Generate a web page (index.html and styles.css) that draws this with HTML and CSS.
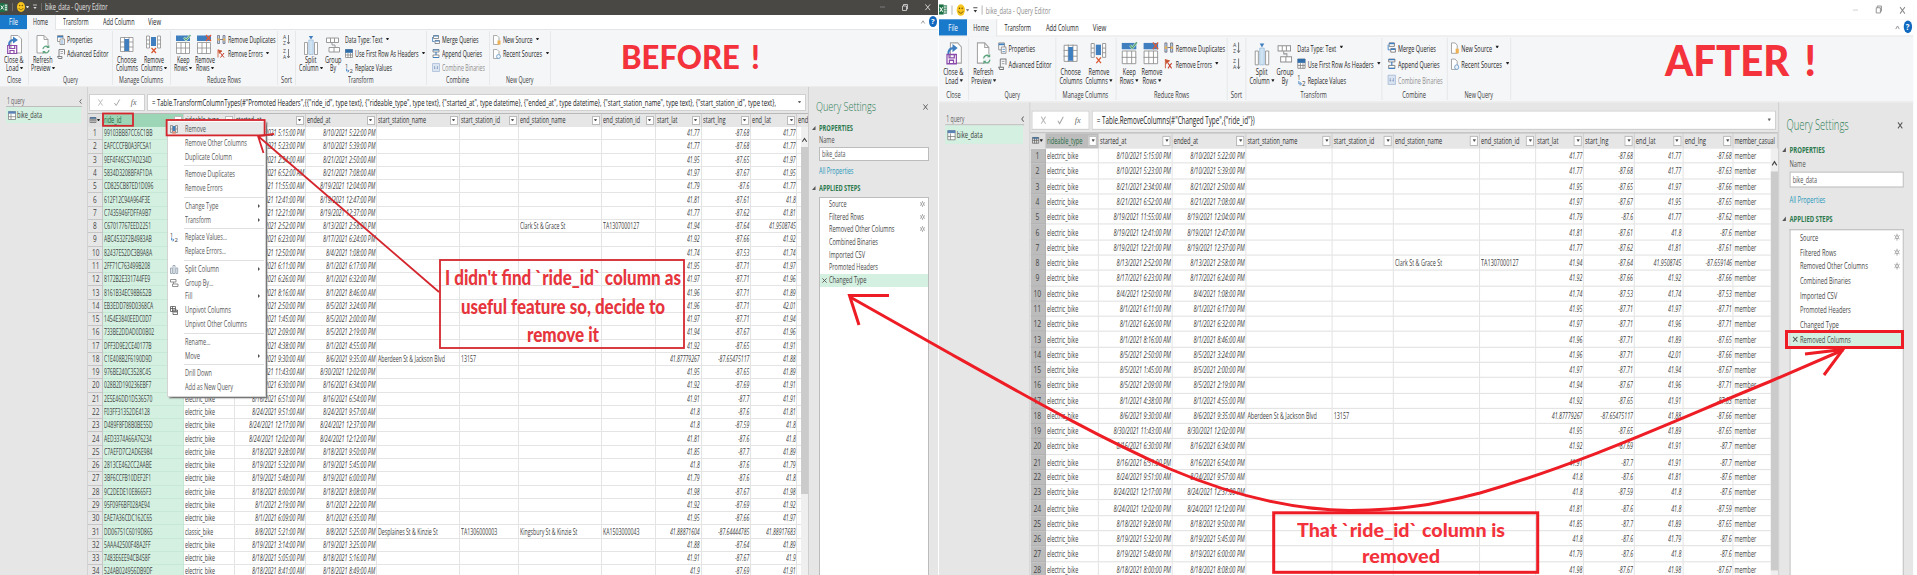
FILE: index.html
```html
<!DOCTYPE html>
<html lang="en">
<head>
<meta charset="utf-8">
<title>bike_data - Query Editor</title>
<link rel="stylesheet" href="styles.css">
</head>
<body>
<main class="board">
  <section class="pane before" id="before"></section>
  <div class="after-slot"><section class="pane after" id="after"></section></div>

  <svg class="marks" viewBox="0 0 1917 575" width="1917" height="575" fill="none">
    <g stroke="#d5262e" stroke-width="1.8">
      <rect x="103" y="113.5" width="30" height="12.3"/>
      <rect x="166.6" y="120" width="98" height="15.4"/>
      <path d="M439 292L258 136M274 134L258 136L263.500 153"/>
      <rect x="440" y="260" width="244" height="88"/>
    </g>
    <g stroke="#ee1c24" stroke-width="3">
      <path d="M889 295.500H849.500L859 325"/>
      <path d="M850 297L950 353.500C1040 404 1100 438 1170 469C1243 500 1300 510 1350 510.500C1410 510 1440 503 1480 493C1590 461 1680 418 1770 381.500L1843 350"/>
      <path d="M1805 354L1843 349.500L1824 375"/>
      <rect x="1273.700" y="512.800" width="264" height="59.500"/>
      <rect x="1786.500" y="331.500" width="116" height="16"/>
    </g>
  </svg>
  <h1 class="title title-before"><span class="fit" data-w="139">BEFORE !</span></h1>
  <h1 class="title title-after"><span class="fit" data-w="151">AFTER !</span></h1>
  <div class="note note-before">
    <p><span class="fit" data-w="236">I didn't find `ride_id` column as</span></p>
    <p><span class="fit" data-w="204">useful feature so, decide to</span></p>
    <p><span class="fit" data-w="72">remove it</span></p>
  </div>
  <div class="note note-after">
    <p><span class="fit" data-w="208">That `ride_id` column is</span></p>
    <p><span class="fit" data-w="78">removed</span></p>
  </div>
</main>
<script src="app.js"></script>
</body>
</html>
```

FILE: styles.css
```css
* { box-sizing: border-box; }
html, body { margin: 0; background: #fff; overflow: hidden; }
body { width: 1917px; height: 575px; font-family: "Open Sans", "Noto Sans", sans-serif; }
p, h1 { margin: 0; }
.board { position: relative; display: flex; width: 1917px; height: 575px; overflow: hidden; }

.fit { display: inline-flex; white-space: pre; flex: none; }
.fit > i { font-style: inherit; flex: none; transform-origin: 0 50%; }
svg { display: block; flex: none; overflow: visible; }

/* editor window */
.pane { width: 938px; height: 575px; flex: none; display: flex; flex-direction: column; overflow: hidden; background: #e6e6e6; font-size: 8.500px; line-height: 10px; color: #262626; }
.after-slot { width: 978px; height: 575px; padding-top: 2px; margin-left: 1px; overflow: hidden; flex: none; }
.after { height: 497px; transform: scale(1.0385, 1.153); transform-origin: 0 0; }

.titlebar { height: 14.500px; flex: none; background: #4a4845; color: #e4e4e4; display: flex; align-items: center; padding-right: 8px; }
.after .titlebar { background: #fff; color: #8d8d8d; padding-bottom: 1px; }
.xl { width: 7.500px; height: 9px; overflow: hidden; margin-right: 4px; }
.bar { width: 1px; height: 8px; background: #8a8a8a; opacity: .6; }
.smile { margin: 0 1px 0 4px; }
.titlebar .fit { margin-left: 3px; }
.winbtns { margin-left: auto; display: flex; align-items: center; gap: 17px; }

.tabs { height: 15.500px; flex: none; background: #fff; border-bottom: 1px solid #e4e5e6; display: flex; align-items: stretch; color: #262626; }
.tab { display: flex; align-items: center; justify-content: center; }
.tab.file { width: 27px; background: #1979ca; color: #fff; }
.tab.home { width: 28.500px; background: #f5f6f8; margin-bottom: -1px; border-right: 1px solid #e4e5e6; }
.help { margin-left: auto; display: flex; align-items: center; gap: 4px; padding-right: 1px; color: #fff; }
.help b { width: 8.400px; height: 11px; border-radius: 50%; background: #1068bf; font-size: 7.500px; line-height: 11px; text-align: center; }

.ribbon { height: 57px; flex: none; background: #f5f6f8; display: flex; border-bottom: 1px solid #ececed; }
.group { display: flex; flex-direction: column; border-right: 1px solid #e6e8ea; margin: 1px 0 1px; }
.tools { height: 45px; display: flex; }
.caption { display: flex; justify-content: center; align-items: center; height: 11px; color: #3c3c3c; }
.big { display: flex; flex-direction: column; align-items: center; padding-top: 3px; flex: none; }
.big .pic { height: 21.500px; display: flex; align-items: center; margin-bottom: 1px; }
.big span.ln { line-height: 8.400px; height: 8.400px; display: flex; align-items: center; margin-top: -.4px; }
.small { display: flex; flex-direction: column; padding-top: 1.500px; flex: none; }
.small > div { height: 14px; display: flex; align-items: center; gap: 2px; }
.small .off { color: #8f8f8f; }
.dd { border: 1.500px solid transparent; border-top: 2.200px solid #222; border-bottom: 0; margin-left: 1.500px; flex: none; width: 3px; height: 2.200px; }

.work { flex: 1; min-height: 0; display: flex; }
.queries { width: 88px; flex: none; border-right: 1px solid #d2d2d2; padding: 9px 6px 0; }
.qhead { display: flex; align-items: center; justify-content: space-between; height: 11px; border-bottom: 1px solid #bdbdbd; color: #5c5c5c; margin-right: -.5px; padding-left: .5px; }
.qitem { height: 16px; background: #d3f0e0; display: flex; align-items: center; padding-left: 2px; gap: 1px; color: #3c3c3c; }

.center { width: 720.500px; flex: none; display: flex; flex-direction: column; min-height: 0; border-right: 1px solid #cfcfcf; overflow: hidden; }
.formula { height: 17px; margin: 7px 2px 2px 1px; display: flex; gap: 1.500px; flex: none; }
.fbtns { width: 56px; border: 1px solid #d0d0d0; background: #fff; display: flex; align-items: center; justify-content: space-around; padding: 0 2px; }
.fbox { flex: 1; border: 1px solid #d0d0d0; background: #fff; display: flex; align-items: center; padding: 0 4px; font-size: 8.800px; color: #161616; }
.fbox .dd { margin-left: auto; border-top-color: #666; }
.fx { font: italic 8px "Liberation Serif", serif; color: #666; }

.hrow { height: 14px; flex: none; display: flex; border-top: 1px solid #b8b8b8; color: #303030; }
.h { flex: none; height: 13px; display: flex; align-items: center; justify-content: space-between; border-right: 1px solid #cfcfcf; padding: 0 1px 1.500px; overflow: hidden; font-size: 8.400px; }
.h.sel { background: #9dd6b6; color: #1f6a41; }
.after .h.sel { background: #bcbcbc; }
.h.corner { justify-content: center; gap: 0; background: #e0e0e0; }
.flt { width: 8px; height: 9.500px; border: 1px solid #bbb; background: #fff; display: flex; align-items: center; justify-content: center; flex: none; margin-top: 1px; }
.flt .dd { margin: 0; border-top-color: #555; }

.body { flex: 1; min-height: 0; display: flex; overflow: hidden; }
.rows { width: 713px; flex: none; background: #fff; overflow: hidden; }
.r { display: flex; height: 13.290px; }
.c { flex: none; height: 100%; display: flex; align-items: center; border-right: 1px solid #e4e4e4; border-bottom: 1px solid #e4e4e4; padding: 0 .5px 0 1px; font-size: 8.100px; color: #424242; overflow: hidden; }
.c.num { justify-content: flex-end; font-style: italic; }
.c.idx { background: #e6e6e6; justify-content: center; border-color: #c6c6c6; font-size: 8.500px; color: #444; }
.after .c.idx { background: #bcbcbc; border-color: #b2b2b2; }
.c.sel { background: #d3f0e0; border-color: #c8e8d6; }
.scroll { flex: 1; background: #efefef; display: flex; flex-direction: column; align-items: center; padding-top: 11px; }
.thumb { width: 100%; background: #cbcbcb; height: 347px; margin-top: 5px; flex: none; }
.after .thumb { height: 346px; }

.settings { flex: 1; padding: 11.500px 9px 0 7.500px; display: flex; flex-direction: column; }
.stitle { display: flex; align-items: center; justify-content: space-between; height: 16px; font-size: 12.500px; font-weight: 300; color: #2f8056; padding-right: 1px; }
.sect { display: flex; align-items: center; font-weight: 700; color: #2c7a4e; height: 10px; margin-left: -4px; font-size: 8.200px; }
.sect svg { margin-right: 3px; }
.sub { padding-left: 2.500px; display: flex; align-items: center; height: 14px; color: #555; }
.inp { margin-left: 2.500px; margin-top: 0; height: 14px; border: 1px solid #bcbcbc; background: #fff; display: flex; align-items: center; padding-left: 2.500px; color: #555; }
.link { color: #2496ba; padding-left: 2.500px; height: 20px; display: flex; align-items: center; }
.steps { flex: 1; margin: 4px 0 0 2.500px; border: 1px solid #bcbcbc; border-bottom: 0; background: #fff; padding-top: .2px; }
.step { height: 12.680px; display: flex; align-items: center; color: #484848; padding: 0 0 .8px 2px; }
.step .x { width: 7.500px; }
.step .gear { margin-left: auto; margin-right: 3.500px; }
.step.on { background: #d3f0e0; }

/* context menu */
.menu { position: absolute; left: 166.500px; top: 120px; width: 99px; height: 277px; padding-top: 1.200px; background: #fff; border: 1px solid #d4d4d4; box-shadow: 1.500px 1.500px 1.500px #777; color: #585858; font-size: 8.500px; line-height: 10px; }
.mi { height: 13.900px; display: flex; align-items: center; padding-right: 5px; }
.mi .ic { width: 17px; padding-left: 2px; flex: none; }
.mi .arrow { margin-left: auto; border: 2px solid transparent; border-left: 2.500px solid #555; border-right: 0; }
.mi.hot { background: #e9e9e9; }
.sep { height: 1px; background: #e0e0e0; margin: 1.400px 1px 1.250px 16px; }

/* annotations */
.marks { position: absolute; left: 0; top: 0; }
.title, .note { position: absolute; font-family: Lato, sans-serif; color: #f3323b; }
.title { font-weight: 900; }
.title-before { left: 621px; top: 37px; font-size: 32px; line-height: 40px; word-spacing: 4px; }
.title-after { left: 1665px; top: 35px; font-size: 42px; line-height: 50px; word-spacing: 6px; }
.note { text-align: center; font-weight: 900; }
.note p { display: flex; justify-content: center; }
.note-before { left: 440px; top: 263px; width: 246px; font-size: 20.500px; line-height: 28.500px; color: #e6353d; }
.note-after { left: 1272px; top: 517px; width: 257px; font-size: 18px; line-height: 26px; }
```

FILE: app.js
```js
const T = (s, w, cls = '') => `<span class="fit ${cls}" data-w="${w}">${s}</span>`;
const K = (s, k) => `<span class="fit" data-k="${k}">${s}</span>`;
const DD = '<span class="dd"></span>';
const svg = (w, h, body, vb) => `<svg width="${w}" height="${h}" viewBox="${vb || `0 0 ${w} ${h}`}" fill="none" preserveAspectRatio="none">${body}</svg>`;

const doc = (x = 0) => `<path d="M${1 + x} .5h7l4 4V18h-11z" fill="#fff" stroke="#a3a3a3"/><path d="M${8 + x} .5v4h4" stroke="#a3a3a3"/>`;
const grid = (hl) => `<path d="M.5 1.500h12.500v14H.5z" fill="#fff" stroke="#8e8e8e" stroke-width=".8"/><path d="M4.500 1v15M9 1v15M0 6h13M0 11h13" stroke="#8e8e8e" stroke-width=".8"/>${hl}`;
const I = {
  load: svg(15, 19, `<path d="M4 .5h7l3.500 3.500v14H4z" fill="#fff" stroke="#a3a3a3"/><path d="M2 10C2 6 4 5 7 5" stroke="#3f7fc0" stroke-width="1.900"/><path d="M6 1.500L11 5L6 8.500z" fill="#3f7fc0"/><path d="M.7 10.500h9v8h-9zM2.700 10.500v3h5v-3M3 18.500v-3h4v3" fill="#fff" stroke="#8a4bab" stroke-width="1.200"/>`),
  refresh: svg(14, 19, doc() + `<circle cx="10" cy="14.500" r="4.300" fill="#f5f6f8"/><path d="M7 14a3 3 0 0 1 5-2M13 15a3 3 0 0 1-5 2" stroke="#5aa37c" stroke-width="1.200"/><path d="M13.300 10v3h-3zM6.700 19v-3h3z" fill="#5aa37c"/>`),
  choose: svg(14, 17, grid('<path d="M4.500 3h4.500v12H4.500z" fill="#3f7fc0"/>')),
  remcol: svg(15, 19, `<path d="M.5 1h3v12h-3zM11.500 1h3v12h-3zM.5 5h3M.5 9h3M11.500 5h3M11.500 9h3" fill="#fff" stroke="#8e8e8e" stroke-width=".8"/><path d="M5 2h5v9H5z" fill="#3f7fc0"/><path d="M5.500 13l4.500 5M10 13l-4.500 5" stroke="#d9532c" stroke-width="1.200"/>`),
  keep: svg(15, 19, `<path d="M.5 7.500h13v11H.5zM5 7.500v11M9.500 7.500v11M0 13h14" fill="#fff" stroke="#8e8e8e" stroke-width=".8"/><path d="M0 .5h14v5.500H0z" fill="#3f7fc0"/><path d="M8 2.500l2 2.500L14.500 0" stroke="#bfe0cc" stroke-width="2.200"/><path d="M8 2.500l2 2.500L14.500 0" stroke="#4a9a6c"/>`),
  remrow: svg(15, 19, `<path d="M.5 7.500h13v11H.5zM5 7.500v11M9.500 7.500v11M0 13h14" fill="#fff" stroke="#8e8e8e" stroke-width=".8"/><path d="M0 .5h14v5.500H0z" fill="#3f7fc0"/><path d="M9 0l5 6M14 0L9 6" stroke="#e25a33" stroke-width="1.200"/>`),
  split: svg(14, 20, `<path d="M.5 7.500h3v12h-3zM10.500 7.500h3v12h-3z" fill="#fff" stroke="#8e8e8e" stroke-width=".8"/><path d="M4.800 5h4.400v14.500H4.800z" fill="#cfe3f3" stroke="#8fb6d8" stroke-width=".6"/><path d="M4.800 1h4.400L7 4.500z" fill="#3f7fc0"/>`),
  group: svg(14, 16, `<path d="M.5 1h12v4.500H.5zM4.500 1v4.500M8.500 1v4.500M3 10.500h10.500V15H3zM8 10.500V15M6 5.500v2.500h3v2.500" fill="#fff" stroke="#8e8e8e" stroke-width=".9"/>`),
  props: svg(8, 10, `<path d="M.5.500h5.500v6H.500z" fill="#fff" stroke="#888" stroke-width=".8"/><path d="M.500 1h5.500v1.500H.500z" fill="#3f7fc0"/><path d="M3 4h4.500v5.500H3z" fill="#fff" stroke="#888" stroke-width=".8"/><path d="M4 6h2.500M4 8h2.500" stroke="#3f7fc0" stroke-width=".7"/>`),
  adv: svg(8, 10, `<path d="M2 .5h5.500v5M2 .5v7M.5 7.500h4.500v2H1.500z" stroke="#777" stroke-width=".9"/><path d="M3.500 2.500h2.500M3.500 4.500h2.500" stroke="#888" stroke-width=".7"/>`),
  dup: svg(8.5, 9, `<path d="M.5.500h2v8h-2zM6 .5h2v8H6z" fill="#bcd3e8" stroke="#667" stroke-width=".7"/><path d="M.5 3.500h2v2h-2zM6 3.500h2v2H6z" fill="#f0b34c"/><path d="M3 4.500h3" stroke="#667" stroke-width=".8"/>`),
  err: svg(8.5, 9, `<path d="M1 .5v8M1 1l4 1-3 2.500" stroke="#c8502e" fill="#c8502e" stroke-width=".8"/><path d="M3.500 4l3.500 4.500M7 4L3.500 8.500" stroke="#c8402e" stroke-width="1"/>`),
  az: (a, b) => svg(7, 11, `<text x="0" y="5" font-size="5" fill="#444" font-family="Open Sans">${a}</text><text x="0" y="10.500" font-size="5" fill="#444" font-family="Open Sans">${b}</text><path d="M5.500 1v8.500M4.200 8l1.300 2 1.300-2" stroke="#555" stroke-width=".7"/>`),
  first: svg(8, 9, `<path d="M.5.500h7v8h-7zM3 4v4.500M5.500 4v4.500M.5 6h7" fill="#fff" stroke="#777" stroke-width=".7"/><path d="M.3.300h7.400v3.500H.3z" fill="#2f6dab"/>`),
  repl: svg(8, 10, `<text x="0" y="5" font-size="5.500" fill="#444" font-family="Open Sans">1</text><text x="4.500" y="9.500" font-size="6" fill="#444" font-family="Open Sans">2</text><path d="M1.500 5.500v2.500h2M2.700 6.600l1.400 1.400-1.400 1.400" stroke="#3f7fc0" stroke-width=".8"/>`),
  merge: svg(8, 9, `<path d="M1.500.500h5v3h-5zM3 5.500h4.500v3H3z" fill="#fff" stroke="#777" stroke-width=".8"/><path d="M1.500 1h5M3 6h4.500" stroke="#3f7fc0" stroke-width="1.200"/><path d="M.5 2v4.500h2" stroke="#3f7fc0" stroke-width=".8"/>`),
  append: svg(8, 9, `<path d="M1 .5h6v2.500H1zM1 6h6v2.500H1z" fill="#fff" stroke="#777" stroke-width=".8"/><path d="M1 1h6M1 8.500h6M4 3v3" stroke="#3f7fc0" stroke-width="1.100"/>`),
  comb: svg(8, 9, `<path d="M.5.500h7v8h-7z" fill="#dbe4f1" stroke="#a9bcd8" stroke-width=".8"/><path d="M2.500 3v3M5.500 3v3M2 5.200h1.500M4.500 5.200H6" stroke="#8fa3c4" stroke-width=".8"/>`),
  newsrc: svg(8, 10, `<path d="M.5.500h3.500l2 2v7H.500z" fill="#fff" stroke="#999" stroke-width=".8"/><path d="M4.500 5.500h3v4h-3z" fill="#efb052"/>`),
  recent: svg(8, 10, `<path d="M.5.500h3.500l2 2v7H.500z" fill="#fff" stroke="#999" stroke-width=".8"/><circle cx="5.500" cy="7.500" r="2" fill="#eaf2fa" stroke="#6d9dcb" stroke-width=".8"/>`),
  table: svg(8, 9, `<path d="M.5.500h7v8h-7zM3 3v5.500M.5 5.700h7" fill="#fff" stroke="#777" stroke-width=".7"/><path d="M.3.300h7.400v2.400H.3z" fill="#5b83b5"/>`),
  x: (c = '#777', w = 5, h = 6) => svg(w, h, `<path d="M.4.400L${w - .4} ${h - .4}M${w - .4} .4L.4 ${h - .4}" stroke="${c}" stroke-width=".9"/>`),
  gear: `<svg class="gear" width="5" height="6" viewBox="0 0 6 7" fill="none" preserveAspectRatio="none"><circle cx="3" cy="3.500" r="1.600" stroke="#999"/><path d="M3 0v1.500M3 5.500V7M0 1.700l1.500.800M4.500 4.500l1.500.800M0 5.300l1.500-.8M4.500 2.500L6 1.700" stroke="#999" stroke-width=".9"/></svg>`,
  smile: '<svg class="smile" width="8" height="10" viewBox="0 0 8 10"><ellipse cx="4" cy="5" rx="4" ry="5" fill="#f7c51e"/><path d="M1.800 6c1 2.300 3.400 2.300 4.400 0" stroke="#6b4a00" stroke-width=".8" fill="none"/><circle cx="2.700" cy="3.500" r=".7" fill="#6b4a00"/><circle cx="5.300" cy="3.500" r=".7" fill="#6b4a00"/></svg>',
  xl: '<svg class="xl" width="7.500" height="9" viewBox="0 0 7.500 9"><path d="M0 0h4.500v9H0z" fill="#1e7145"/><path d="M4.500 1.200h3v6.600h-3z" fill="#fff" stroke="#1e7145" stroke-width=".7"/><path d="M6 1.500v6M4.500 3.500h3M4.500 5.500h3" stroke="#1e7145" stroke-width=".5"/><path d="M.8 2.500l2.800 4M3.600 2.500L.8 6.500" stroke="#fff" stroke-width=".9"/></svg>',
};

const big = (icon, w, ml, lines) => `<div class="big" style="width:${w}px;margin-left:${ml}px"><div class="pic">${icon}</div>${lines.map(l => `<span class="ln">${T(l[0], l[1])}${l[2] ? DD : ''}</span>`).join('')}</div>`;
const small = (ml, rows) => `<div class="small" style="margin-left:${ml}px">${rows.map(r => `<div class="${r[4] || ''}">${r[0]}${r[1] ? T(r[1], r[2]) : ''}${r[3] ? DD : ''}</div>`).join('')}</div>`;
const group = (w, cap, cw, tools) => `<div class="group" style="width:${w}px"><div class="tools">${tools}</div><div class="caption">${T(cap, cw)}</div></div>`;

const ribbon = () => `<div class="ribbon">` +
  group(28.5, 'Close', 14, big(I.load, 26, 1, [['Close &amp;', 19.5], ['Load', 12.5, 1]])) +
  group(84, 'Query', 15, big(I.refresh, 26, 1, [['Refresh', 19.5], ['Preview', 19.5, 1]]) + small(1.5, [[I.props, 'Properties', 25.5], [I.adv, 'Advanced Editor', 41.5]])) +
  group(58, 'Manage Columns', 44, big(I.choose, 26, 1.5, [['Choose', 19.5], ['Columns', 22]]) + big(I.remcol, 27, 0, [['Remove', 20], ['Columns', 21.5, 1]])) +
  group(107.5, 'Reduce Rows', 34, big(I.keep, 22, 1.5, [['Keep', 12.5], ['Rows', 13.5, 1]]) + big(I.remrow, 21, 0, [['Remove', 20], ['Rows', 13.5, 1]]) + small(2, [[I.dup, 'Remove Duplicates', 47.5], [I.err, 'Remove Errors', 35, 1]])) +
  group(18, 'Sort', 11, small(5, [[I.az('A', 'Z')], [I.az('Z', 'A')]])) +
  group(131, 'Transform', 25.5, big(I.split, 25, 2, [['Split', 11.5], ['Column', 19.5, 1]]) + big(I.group, 22, -1, [['Group', 16.5], ['By', 6]]) + small(1, [['', 'Data Type: Text', 37.5, 1], [I.first, 'Use First Row As Headers', 63.5, 1], [I.repl, 'Replace Values', 37]])) +
  group(62.5, 'Combine', 23, small(4.5, [[I.merge, 'Merge Queries', 36.5], [I.append, 'Append Queries', 40], [I.comb, 'Combine Binaries', 43, 0, 'off']])) +
  group(61, 'New Query', 27.5, small(3.5, [[I.newsrc, 'New Source', 29.5, 1], [I.recent, 'Recent Sources', 39, 1]])) + `</div>`;

const D = `99103BB87CC6C1BB|10|5:15:00 PM|5:22:00 PM|41.77|-87.68|41.77|-87.68
EAFCCCFB0A3FC5A1|10|5:23:00 PM|5:39:00 PM|41.77|-87.68|41.77|-87.63
9EF4F46C57AD234D|21|2:34:00 AM|2:50:00 AM|41.95|-87.65|41.97|-87.66
5834D3208BFAF1DA|21|6:52:00 AM|7:08:00 AM|41.97|-87.67|41.95|-87.65
CD825CB87ED1D096|19|11:55:00 AM|12:04:00 PM|41.79|-87.6|41.77|-87.62
612F12C94A964F3E|19|12:41:00 PM|12:47:00 PM|41.81|-87.61|41.8|-87.6
C7435946FDFFA9B7|19|12:21:00 PM|12:37:00 PM|41.77|-87.62|41.81|-87.61
C67017767EED2251|13|2:52:00 PM|2:58:00 PM|41.94|-87.64|41.9508745|-87.659146
ABC4532F2B4983AB|17|6:23:00 PM|6:24:00 PM|41.92|-87.66|41.92|-87.66
82437E52DC3B9A8A|4|12:50:00 PM|1:08:00 PM|41.74|-87.53|41.74|-87.53
2FF71C763499B208|1|6:11:00 PM|6:17:00 PM|41.95|-87.71|41.97|-87.71
8172B2E331744FE9|1|6:26:00 PM|6:32:00 PM|41.97|-87.71|41.96|-87.71
8161B34EC98B652B|1|8:16:00 AM|8:46:00 AM|41.96|-87.71|41.89|-87.65
EB3EDD789D0368CA|5|2:50:00 PM|3:24:00 PM|41.96|-87.71|42.01|-87.66
1454E3840EEDC0D7|5|1:45:00 PM|2:00:00 PM|41.97|-87.71|41.94|-87.67
733BE2DDAD0D0B02|5|2:09:00 PM|2:19:00 PM|41.94|-87.67|41.96|-87.71
DFF3D9E2CE40177B|1|4:38:00 PM|4:55:00 PM|41.92|-87.65|41.91|-87.63
C1E408B2F6190D9D|6|9:30:00 AM|9:35:00 AM|41.87779267|-87.65475117|41.88|-87.66
976BE240C3528C45|30|11:43:00 AM|12:02:00 PM|41.95|-87.65|41.89|-87.65
028B2D190236EBF7|16|6:30:00 PM|6:34:00 PM|41.92|-87.69|41.91|-87.7
2E5E46DD1D536570|16|6:51:00 PM|6:54:00 PM|41.91|-87.7|41.91|-87.7
F03FF31352DE4128|24|9:51:00 AM|9:57:00 AM|41.8|-87.6|41.81|-87.6
D489F8FD8B0BE55D|24|12:17:00 PM|12:37:00 PM|41.8|-87.59|41.8|-87.6
AED3374A66A76234|24|12:02:00 PM|12:12:00 PM|41.81|-87.6|41.8|-87.59
C7AEFD7C2AD6E984|18|9:28:00 PM|9:50:00 PM|41.85|-87.7|41.89|-87.65
2813CE462CC2AABE|19|5:32:00 PM|5:45:00 PM|41.8|-87.6|41.79|-87.6
3BF6CCFB10DEF2F1|19|5:48:00 PM|6:00:00 PM|41.79|-87.6|41.8|-87.6
9C2DEDE10E8665F3|18|8:00:00 PM|8:08:00 PM|41.98|-87.67|41.98|-87.67
95F09F6BF028AE94|1|2:19:00 PM|2:22:00 PM|41.92|-87.69|41.92|
EAE7A36CDC162C65|1|6:09:00 PM|6:35:00 PM|41.95|-87.66|41.97|
DD06751C6019D865|8|5:21:00 PM|5:25:00 PM|41.88871604|-87.64444785|41.88917683|
5AAA42500F48A2FF|19|3:14:00 PM|3:25:00 PM|41.88|-87.64|41.89|
7483E6EE94CB458F|18|5:05:00 PM|5:16:00 PM|41.91|-87.67|41.9|
524AB024956DB9DF|18|8:41:00 AM|8:49:00 AM|41.9|-87.69|41.91|`.split('\n').map((l, i) => {
  const [id, d, s, e, la, ln, ea, en] = l.split('|');
  const n = i + 1;
  return {
    ride_id: id, rideable_type: n === 31 ? 'classic_bike' : 'electric_bike',
    started_at: `8/${d}/2021 ${s}`, ended_at: `8/${d}/2021 ${e}`,
    start_station_name: { 18: 'Aberdeen St &amp; Jackson Blvd', 31: 'Desplaines St &amp; Kinzie St' }[n] || '',
    start_station_id: { 18: '13157', 31: 'TA1306000003' }[n] || '',
    end_station_name: { 8: 'Clark St &amp; Grace St', 31: 'Kingsbury St &amp; Kinzie St' }[n] || '',
    end_station_id: { 8: 'TA1307000127', 31: 'KA1503000043' }[n] || '',
    start_lat: la, start_lng: ln, end_lat: ea, end_lng: en, member_casual: 'member',
  };
});

/* column: name, width, header text width */
const mid = [['started_at', 71, 25.5], ['ended_at', 71, 23.5], ['start_station_name', 83, 48], ['start_station_id', 59, 39], ['end_station_name', 83, 45.5], ['end_station_id', 54, 37], ['start_lat', 46, 20.5], ['start_lng', 49, 22.5], ['end_lat', 46.5, 19]];
const colsL = [['ride_id', 80.5, 17.5], ['rideable_type', 51, 34], ...mid, ['end_lng', 12, 21]];
const colsR = [['rideable_type', 51.5, 34], ...mid, ['end_lng', 48.5, 20.5], ['member_casual', 43, 39]];
const numeric = /_at$|_lat$|_lng$/;

function gridView(cols, count, left) {
  const head = `<div class="hrow"><div class="h corner" style="width:${left ? 15 : 14.5}px">${svg(6, 6, '<path d="M0 .5h6v5H0zM2 .5v5M4 .5v5M0 3h6" stroke="#555" stroke-width=".6"/><path d="M0 .3h6v1.400H0z" fill="#456f9c"/>')}${DD}</div>` +
    cols.map((c, i) => `<div class="h ${i ? '' : 'sel'}" style="width:${c[1]}px">${T(c[0], c[2])}${c[1] > 44 ? `<span class="flt">${DD}</span>` : ''}</div>`).join('') + '</div>';
  const rows = D.slice(0, count).map((r, n) => `<div class="r"><div class="c idx" style="width:${left ? 15 : 14.5}px">${K(n + 1, .76)}</div>` +
    cols.map((c, i) => {
      let v = r[c[0]];
      /* the open menu lies over the type column of the first rows */
      if (left && (c[0] === 'end_lng' || (c[0] === 'rideable_type' && n < 20))) v = '';
      const k = c[0] === 'ride_id' ? .623 : numeric.test(c[0]) ? (/_at/.test(c[0]) ? .665 : .637) : .647;
      return `<div class="c ${numeric.test(c[0]) ? 'num' : ''} ${left && !i ? 'sel' : ''}" style="width:${c[1]}px">${v ? K(v, k) : ''}</div>`;
    }).join('') + '</div>').join('');
  return head + `<div class="body"><div class="rows">${rows}</div><div class="scroll">${svg(5, 4, '<path d="M.3 3.700L2.500.500l2.200 3.200" stroke="#444" stroke-width="1.100"/>')}<div class="thumb"></div></div></div>`;
}

const steps = (list) => list.map((s, i) => `<div class="step ${i === list.length - 1 ? 'on' : ''}"><span class="x">${i === list.length - 1 ? I.x('#555', 5, 5) : ''}</span>${T(s[0], s[1])}${i < 3 ? I.gear : ''}</div>`).join('');
const tri = svg(3.5, 4, '<path d="M3.500 0v4H0z" fill="#555"/>');

function pane(left) {
  const wc = left ? '#ddd' : '#888';
  const list = [['Source', 17.5], ['Filtered Rows', 35], ['Removed Other Columns', 65.5], ['Combined Binaries', 49], ['Imported CSV', 36], ['Promoted Headers', 49], ['Changed Type', 37.5]];
  if (!left) list.push(['Removed Columns', 49]);
  return `<div class="titlebar">${I.xl}<span class="bar"></span>${I.smile}<span class="dd" style="border-top-color:${wc};margin:0 4px 0 0"></span>${svg(4, 6, `<path d="M0 1h4" stroke="${left ? wc : '#333'}" stroke-width=".8"/><path d="M.3 3h3.400L2 5z" fill="${left ? wc : '#333'}"/>`)}<span class="bar" style="margin-left:4px"></span>${T('bike_data - Query Editor', 62.5)}
    <div class="winbtns">${svg(5, 6, `<path d="M0 3h5" stroke="${wc}" stroke-width=".7" opacity=".5"/>`)}${svg(6, 7, `<path d="M.5 2h4v4.500h-4zM1.500 2V.5h4v4.500h-1" stroke="${wc}" stroke-width=".8"/>`)}${I.x(wc, 5.5, 6.5)}</div></div>
  <div class="tabs"><div class="tab file">${T('File', 9)}</div><div class="tab home">${T('Home', 15)}</div><div class="tab" style="margin-left:7px">${T('Transform', 25.5)}</div><div class="tab" style="margin-left:14.500px">${T('Add Column', 31.5)}</div><div class="tab" style="margin-left:13.500px">${T('View', 13)}</div>
    <div class="help">${svg(4, 4, '<path d="M.3 3.500L2 .8l1.700 2.700" stroke="#888" stroke-width=".8"/>')}<b>?</b></div></div>
  ${ribbon()}
  <div class="work">
    <aside class="queries"><div class="qhead">${T('1 query', 17.5)}${svg(3, 5, '<path d="M2.500.300L.700 2.500l1.800 2.200" stroke="#666" stroke-width=".9"/>')}</div><div class="qitem">${I.table}${T('bike_data', 25)}</div></aside>
    <div class="center">
      <div class="formula"><div class="fbtns">${I.x('#b5b5b5', 5, 7)}${svg(6, 7, '<path d="M.4 4l1.800 2.500L5.700.500" stroke="#a8a8a8"/>')}<span class="fx">fx</span></div>
      <div class="fbox">${left ? T('= Table.TransformColumnTypes(#"Promoted Headers",{{"ride_id", type text}, {"rideable_type", type text}, {"started_at", type datetime}, {"ended_at", type datetime}, {"start_station_name", type text}, {"start_station_id", type text},', 624) : T('= Table.RemoveColumns(#"Changed Type",{"ride_id"})', 152)}${DD}</div></div>
      ${gridView(left ? colsL : colsR, left ? 34 : 28, left)}
    </div>
    <aside class="settings"><div class="stitle">${T('Query Settings', 60)}${I.x('#555', 5, 6)}</div>
      <div class="sect" style="margin-top:8.500px">${tri}${T('PROPERTIES', 34)}</div>
      <div class="sub">${T('Name', 15.5)}</div><div class="inp">${T('bike_data', 23.5)}</div>
      <div class="link">${T('All Properties', 34.5)}</div>
      <div class="sect" style="margin-top:2px">${tri}${T('APPLIED STEPS', 41.5)}</div>
      <div class="steps">${steps(list)}</div></aside>
  </div>`;
}

const menu = [['Remove', 21, 'rem'], ['Remove Other Columns', 62], ['Duplicate Column', 47], 0, ['Remove Duplicates', 50], ['Remove Errors', 37.5], 0, ['Change Type', 33.5, '', 1], ['Transform', 26, '', 1], 0, ['Replace Values...', 42, 'repl'], ['Replace Errors...', 41], 0, ['Split Column', 34, 'split', 1], ['Group By...', 28.5, 'group'], ['Fill', 7.5, '', 1], ['Unpivot Columns', 46, 'unp'], ['Unpivot Other Columns', 62], 0, ['Rename...', 25.5], ['Move', 15, '', 1], 0, ['Drill Down', 27], ['Add as New Query', 48]];
const mIcons = {
  rem: svg(8, 9, '<path d="M.5.500h2v7h-2zM5.500.500h2v7h-2zM.5 4h2M5.500 4h2" stroke="#777" stroke-width=".7"/><path d="M2.800 1h2.400v5H2.800z" fill="#3f7fc0"/><path d="M2.500 6l3 3M5.500 6l-3 3" stroke="#d9532c" stroke-width=".8"/>'),
  repl: I.repl,
  split: svg(8, 10, '<path d="M.5 4h1.700v5.500H.500zM3 1.500h2v8H3zM6 4h1.700v5.500H6z" stroke="#8a9aaa" stroke-width=".8"/>'),
  group: svg(8, 8, '<path d="M.5.500h5.500V3H.500zM2.500 5h5.500v2.500H2.500zM3.500 3v2" stroke="#777" stroke-width=".8"/>'),
  unp: svg(8, 9, '<path d="M.5.500h5v5h-5zM.5 2.500h5M2.500.500v5M3 4h4.500v4.500H3z" stroke="#555" stroke-width=".8"/><path d="M3.500 4.500h3.500v2H3.500z" fill="#777"/>'),
};
const menuHTML = `<div class="menu">${menu.map((m, i) => m ? `<div class="mi ${i ? '' : 'hot'}"><span class="ic">${m[2] ? mIcons[m[2]] : ''}</span>${T(m[0], m[1])}${m[3] ? '<span class="arrow"></span>' : ''}</div>` : '<div class="sep"></div>').join('')}</div>`;

const before = document.getElementById('before');
before.innerHTML = pane(true);
document.getElementById('after').innerHTML = pane(false);
before.insertAdjacentHTML('afterend', menuHTML);

function fitAll() {
  const jobs = [...document.querySelectorAll('.fit')].map(el => {
    el.innerHTML = `<i>${el.innerHTML}</i>`;
    return { el, inner: el.firstChild, z: el.closest('.after') ? 1.0385 : 1 };
  });
  jobs.forEach(j => { j.n = j.inner.getBoundingClientRect().width / j.z; });
  jobs.forEach(j => {
    const w = j.el.dataset.w ? +j.el.dataset.w : j.n * j.el.dataset.k;
    j.el.style.width = w + 'px';
    j.inner.style.transform = `scaleX(${w / j.n})`;
  });
}
fitAll();
```
